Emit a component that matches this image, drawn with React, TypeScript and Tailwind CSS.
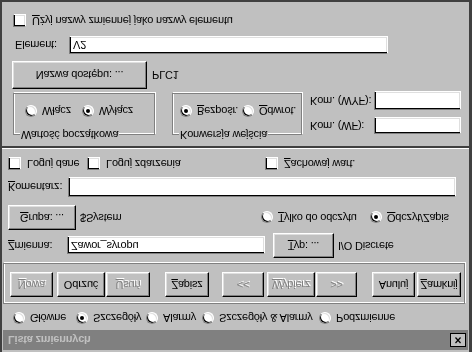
import React from "react";

// Note: the whole window is mirrored vertically; button bevels are drawn so
// that, after mirroring, light sits top-left and shadow bottom-right.
const RAISED =
  "flex items-center justify-center bg-[#c0c0c0] border border-b-white border-l-white border-r-black border-t-black shadow-[inset_-1px_1px_0_#808080,inset_1px_-1px_0_#dfdfdf]";
const SUNKEN =
  "bg-white border border-t-[#808080] border-l-[#808080] border-b-white border-r-white shadow-[inset_1px_1px_0_#000,inset_-1px_-1px_0_#dfdfdf]";
const DIS = "text-[#808080] [text-shadow:1px_1px_0_#fff]";

function U({ children }: { children: React.ReactNode }) {
  return <span className="underline underline-offset-[1px]">{children}</span>;
}

function Btn({
  className,
  children,
  disabled,
}: {
  className: string;
  children: React.ReactNode;
  disabled?: boolean;
}) {
  return (
    <div className={`${RAISED} shrink-0 ${className}`}>
      <span className={disabled ? DIS : ""}>{children}</span>
    </div>
  );
}

function Radio({
  checked,
  children,
  className,
}: {
  checked?: boolean;
  children: React.ReactNode;
  className: string;
}) {
  return (
    <div className={`flex items-center shrink-0 ${className}`}>
      <div
        className={`w-[12px] h-[12px] rounded-full flex items-center justify-center shrink-0 ${SUNKEN}`}
      >
        {checked && <div className="w-[4px] h-[4px] rounded-full bg-black" />}
      </div>
      <span className="ml-[5px] whitespace-nowrap">{children}</span>
    </div>
  );
}

function Check({
  children,
  className,
}: {
  children: React.ReactNode;
  className: string;
}) {
  return (
    <div className={`flex items-center shrink-0 ${className}`}>
      <div className={`w-[13px] h-[13px] shrink-0 ${SUNKEN}`} />
      <span className="ml-[6px] whitespace-nowrap">{children}</span>
    </div>
  );
}

function Group({
  label,
  className,
  children,
}: {
  label: string;
  className: string;
  children: React.ReactNode;
}) {
  return (
    <div
      className={`relative shrink-0 border border-[#808080] shadow-[1px_1px_0_#fff,inset_1px_1px_0_#fff] ${className}`}
    >
      <span className="absolute left-[6px] top-[-6px] bg-[#c0c0c0] px-[1px] whitespace-nowrap">
        {label}
      </span>
      {children}
    </div>
  );
}

export default function App() {
  return (
    <div className="w-[472px] h-[352px] overflow-hidden bg-[#c0c0c0] [transform:scaleY(-1)] font-['Liberation_Sans',Arial,sans-serif] text-[11px] tracking-[-0.2px] leading-none text-black">
      <div className="h-full flex flex-col pt-[2px] border-l-2 border-l-[#404040] border-r-[3px] border-r-[#404040] border-b-2 border-b-[#404040]">
        {/* title bar */}
        <div className="h-[20px] ml-[1px] mr-[1px] bg-[#808080] flex items-center justify-between pl-[5px] pr-[2px] shrink-0">
          <span className="font-bold text-[#c0c0c0]">Lista zmiennych</span>
          <div className="w-[16px] h-[14px] bg-[#c0c0c0] border border-black flex items-center justify-center font-bold text-[12px]">
            ×
          </div>
        </div>

        {/* view radios */}
        <div className="mt-[5px] h-[14px] flex items-center shrink-0">
          <Radio className="ml-[11px] w-[63px]">Główne</Radio>
          <Radio checked className="w-[70px]">
            Szczegóły
          </Radio>
          <Radio className="w-[56px]">Alarmy</Radio>
          <Radio className="w-[117px]">Szczegóły &amp; Alarmy</Radio>
          <Radio className="">Podzmienne</Radio>
        </div>

        {/* buttons frame */}
        <div className="mt-[7px] ml-[1px] mr-[4px] h-[41px] shrink-0 border border-[#808080] shadow-[1px_1px_0_#fff,inset_1px_1px_0_#fff] pt-[6px] flex items-start">
          <Btn disabled className="ml-[6px] w-[43px] h-[25px]">
            <U>N</U>owa
          </Btn>
          <Btn className="ml-[4px] w-[48px] h-[25px]">Odrzuć</Btn>
          <Btn disabled className="ml-[1px] w-[44px] h-[25px]">
            <U>U</U>suń
          </Btn>
          <Btn className="ml-[15px] w-[44px] h-[25px]">
            <U>Z</U>apisz
          </Btn>
          <Btn disabled className="ml-[13px] w-[42px] h-[25px]">
            &lt;&lt;
          </Btn>
          <Btn disabled className="ml-[3px] w-[48px] h-[25px]">
            <U>W</U>ybierz
          </Btn>
          <Btn disabled className="ml-[1px] w-[41px] h-[25px]">
            &gt;&gt;
          </Btn>
          <Btn className="ml-[15px] w-[43px] h-[25px]">Anuluj</Btn>
          <Btn className="ml-[2px] w-[44px] h-[25px]">
            <U>Z</U>amknij
          </Btn>
        </div>

        {/* Zmienna row */}
        <div className="mt-[5px] h-[25px] flex items-center shrink-0">
          <span className="ml-[6px] w-[59px] whitespace-nowrap">
            <U>Z</U>mienna:
          </span>
          <div className={`w-[198px] h-[18px] flex items-center pl-[3px] ${SUNKEN}`}>
            Zawor_syropu
          </div>
          <Btn className="ml-[8px] w-[61px] h-[25px]">
            <U>T</U>yp: ...
          </Btn>
          <span className="ml-[4px] whitespace-nowrap">I/O Discrete</span>
        </div>

        {/* Grupa row */}
        <div className="mt-[3px] h-[25px] flex items-center shrink-0">
          <Btn className="ml-[6px] w-[68px] h-[25px]">
            <U>G</U>rupa: ...
          </Btn>
          <span className="ml-[4px] w-[181px] whitespace-nowrap">$System</span>
          <Radio className="w-[109px]">
            <U>T</U>ylko do odczytu
          </Radio>
          <Radio checked className="">
            <U>O</U>dczyt/Zapis
          </Radio>
        </div>

        {/* Komentarz */}
        <div className="mt-[8px] h-[20px] flex items-center shrink-0">
          <span className="ml-[6px] w-[60px] whitespace-nowrap">
            <U>K</U>omentarz:
          </span>
          <div className={`w-[388px] h-[20px] ${SUNKEN}`} />
        </div>

        {/* Loguj row */}
        <div className="mt-[7px] h-[13px] flex items-center shrink-0">
          <Check className="ml-[6px] w-[79px]">Loguj dane</Check>
          <Check className="w-[178px]">Loguj zdarzenia</Check>
          <Check className="">
            <U>Z</U>achowaj wart.
          </Check>
        </div>

        {/* separator */}
        <div className="mt-[8px] h-[1px] bg-white shrink-0" />
        <div className="h-[2px] bg-[#404040] shrink-0" />

        {/* group boxes & Kom */}
        <div className="mt-[11px] h-[44px] flex items-start shrink-0">
          <Group label="Wartość początkowa" className="ml-[11px] w-[142px] h-[42px]">
            <div className="mt-[17px] flex items-center">
              <Radio className="ml-[11px] w-[57px]">Włącz</Radio>
              <Radio checked className="">
                Wyłącz
              </Radio>
            </div>
          </Group>
          <Group label="Konwersja wejścia" className="ml-[17px] w-[130px] h-[42px]">
            <div className="mt-[17px] flex items-center">
              <Radio checked className="ml-[7px] w-[62px]">
                <U>B</U>ezpośr.
              </Radio>
              <Radio className="">
                <U>O</U>dwrot.
              </Radio>
            </div>
          </Group>
          <div className="ml-[8px] flex flex-col">
            <div className="mt-[1px] h-[17px] flex items-center">
              <span className="w-[64px] whitespace-nowrap">Kom. (WF):</span>
              <div className={`w-[87px] h-[17px] ${SUNKEN}`} />
            </div>
            <div className="mt-[7px] h-[19px] flex items-center">
              <span className="w-[64px] whitespace-nowrap">Kom. (WYF):</span>
              <div className={`w-[87px] h-[19px] ${SUNKEN}`} />
            </div>
          </div>
        </div>

        {/* Nazwa dostępu */}
        <div className="mt-[2px] h-[28px] flex items-center shrink-0">
          <Btn className="ml-[10px] w-[135px] h-[28px]">Nazwa dostępu: ...</Btn>
          <span className="ml-[5px]">PLC1</span>
        </div>

        {/* Element */}
        <div className="mt-[7px] h-[18px] flex items-center shrink-0">
          <span className="ml-[13px] w-[54px] whitespace-nowrap">Element:</span>
          <div className={`w-[319px] h-[18px] flex items-center pl-[3px] ${SUNKEN}`}>
            V2
          </div>
        </div>

        {/* Użyj */}
        <div className="mt-[9px] h-[13px] flex items-center shrink-0">
          <Check className="ml-[11px]">
            <U>U</U>żyj nazwy zmiennej jako nazwy elementu
          </Check>
        </div>
      </div>
    </div>
  );
}
